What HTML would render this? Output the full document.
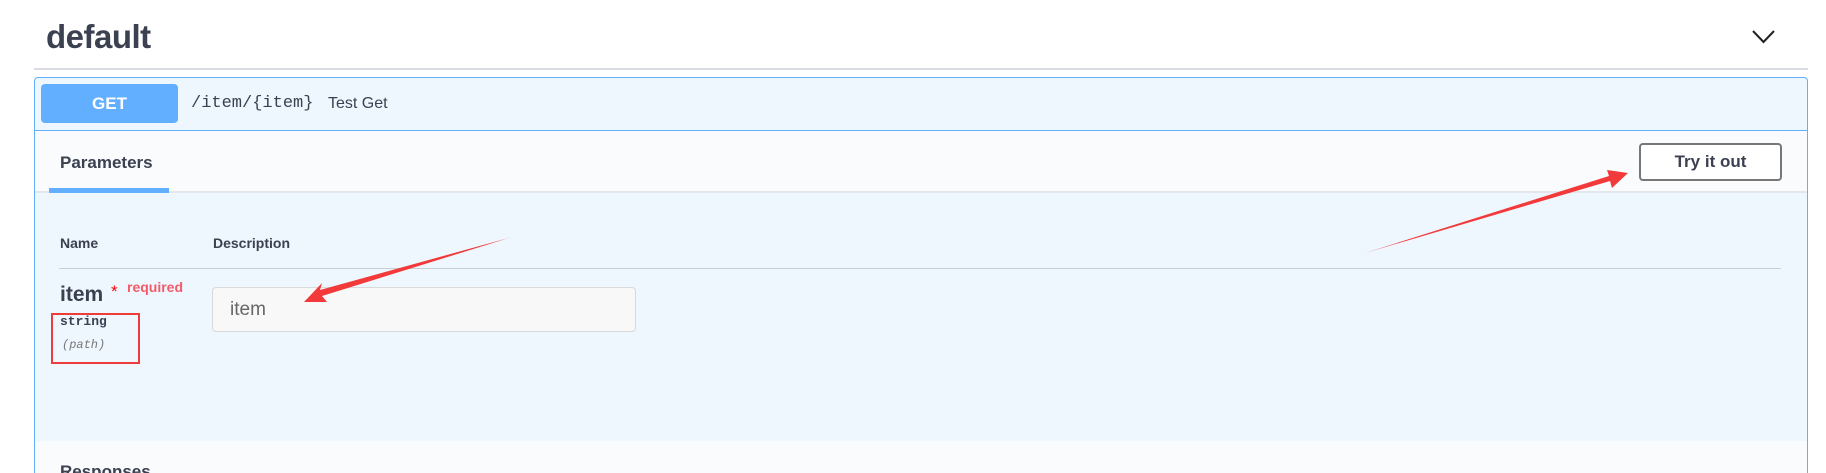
<!DOCTYPE html>
<html><head><meta charset="utf-8"><style>
*{margin:0;padding:0;box-sizing:border-box}
html,body{width:1826px;height:473px;overflow:hidden}
body{background:#fff;font-family:"Liberation Sans",sans-serif;color:#3b4151}
#w{position:relative;width:1826px;height:473px;overflow:hidden}
.a{position:absolute}
</style></head><body><div id="w">
<div class="a" style="left:46px;top:18px;font-size:33px;font-weight:bold;letter-spacing:-0.5px">default</div>
<svg class="a" style="left:1750px;top:28px" width="28" height="18"><path d="M3 3 L13.5 14 L24 3" fill="none" stroke="#222" stroke-width="2"/></svg>
<div class="a" style="left:34px;top:68px;width:1774px;height:2px;background:#d9dde3"></div>
<div class="a" style="left:34px;top:77px;width:1774px;height:440px;border:1px solid #61affe;border-radius:4px;background:#eef6fe"></div>
<div class="a" style="left:41px;top:84px;width:137px;height:39px;background:#61affe;border-radius:4px;color:#fff;font-weight:bold;font-size:17px;text-align:center;line-height:39px">GET</div>
<div class="a" style="left:191px;top:94px;font-family:'Liberation Mono',monospace;font-size:17px;line-height:20px">/item/{item}</div>
<div class="a" style="left:328px;top:94px;font-size:16px;line-height:20px">Test Get</div>
<div class="a" style="left:35px;top:130px;width:1772px;height:1px;background:#61affe"></div>
<div class="a" style="left:35px;top:131px;width:1772px;height:62px;background:#f9fbfd;border-bottom:2px solid #e3e7ec"></div>
<div class="a" style="left:60px;top:152px;font-size:17px;font-weight:bold;line-height:22px">Parameters</div>
<div class="a" style="left:49px;top:188px;width:120px;height:5px;background:#61affe"></div>
<div class="a" style="left:1639px;top:143px;width:143px;height:38px;border:2px solid #777;border-radius:4px;background:#fff;font-weight:bold;font-size:17px;text-align:center;line-height:34px">Try it out</div>
<div class="a" style="left:60px;top:235px;font-size:14px;font-weight:bold">Name</div>
<div class="a" style="left:213px;top:235px;font-size:14px;font-weight:bold">Description</div>
<div class="a" style="left:59px;top:268px;width:1722px;height:1px;background:#c8ced6"></div>
<div class="a" style="left:60px;top:282px;font-size:21px;font-weight:bold;line-height:26px">item</div>
<div class="a" style="left:111px;top:282px;font-size:17px;color:#f00">*</div>
<div class="a" style="left:127px;top:279px;font-size:14px;font-weight:bold;color:#f45b69">required</div>
<div class="a" style="left:60px;top:314px;font-family:'Liberation Mono',monospace;font-size:13px;font-weight:bold">string</div>
<div class="a" style="left:62px;top:338px;font-family:'Liberation Mono',monospace;font-size:12px;font-style:italic;color:#777">(path)</div>
<div class="a" style="left:51px;top:313px;width:89px;height:51px;border:2px solid #ee3b3b"></div>
<div class="a" style="left:212px;top:287px;width:424px;height:45px;border:1px solid #d9d9d9;border-radius:4px;background:#f8f8f8;padding-left:17px;font-size:19px;line-height:43px;color:#666">item</div>
<div class="a" style="left:35px;top:441px;width:1772px;height:60px;background:#f9fbfd"></div>
<div class="a" style="left:60px;top:462px;font-size:17px;font-weight:bold">Responses</div>
<svg class="a" style="left:0;top:0" width="1826" height="473">
<path d="M512 237 L320 290 L322 283 L304 302 L327 302 L322 296 Z" fill="#f23a3a"/>
<path d="M1365 253 L1610 181 L1612 188 L1628 173 L1607 170 L1609 176 Z" fill="#f23a3a"/>
</svg>
</div></body></html>
